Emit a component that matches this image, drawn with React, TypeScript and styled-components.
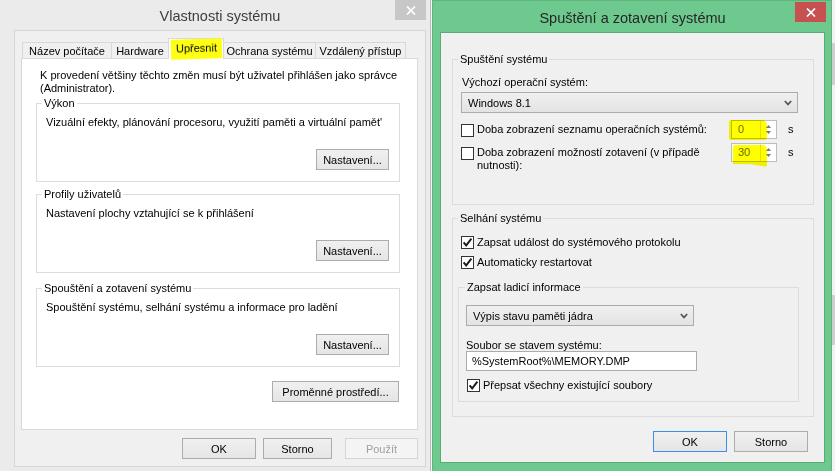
import React from "react";
import styled, { createGlobalStyle } from "styled-components";

const FONT = `"Liberation Sans", Arial, sans-serif`;

const GlobalStyle = createGlobalStyle`
  html, body { margin: 0; padding: 0; }
  body {
    width: 835px;
    height: 471px;
    overflow: hidden;
    background: #f4f4f4;
    font-family: ${FONT};
    font-size: 11px;
    color: #000;
  }
  * { box-sizing: border-box; }
`;

const Desktop = styled.div`
  display: flex;
  align-items: flex-start;
  width: 835px;
  height: 471px;
  overflow: hidden;
`;

/* ---------- window chrome ---------- */

const LeftWindow = styled.div`
  position: relative;
  flex: none;
  width: 431px;
  height: 471px;
  padding: 0 4px 0 14px;
  background: #ebebeb;
  border-right: 1px solid #bcbcbc;
  display: flex;
  flex-direction: column;
`;

const RightWindow = styled.div`
  position: relative;
  flex: none;
  width: 400px;
  height: 480px;
  margin-left: 1px;
  padding: 0 6px 0 7px;
  background: #6dc98d;
  border: 1px solid #5fb57c;
  display: flex;
  flex-direction: column;
`;

const TitleBar = styled.div<{ $h: number; $color: string }>`
  flex: none;
  height: ${(p) => p.$h}px;
  padding-top: 2px;
  display: flex;
  align-items: center;
  justify-content: center;
  font-size: 14.5px;
  color: ${(p) => p.$color};
  white-space: nowrap;
`;

const CloseButton = styled.div<{ $bg: string; $top: number; $right: number; $w: number }>`
  position: absolute;
  top: ${(p) => p.$top}px;
  right: ${(p) => p.$right}px;
  width: ${(p) => p.$w}px;
  height: 20px;
  background: ${(p) => p.$bg};
  display: flex;
  align-items: center;
  justify-content: center;
`;

const Client = styled.div<{ $h: number; $border: string }>`
  flex: none;
  height: ${(p) => p.$h}px;
  background: #f0f0f0;
  border: 1px solid ${(p) => p.$border};
  display: flex;
  flex-direction: column;
`;

const Backdrop = styled.div`
  flex: 1;
  height: 471px;
  background: #f2f2f2;
  display: flex;
  flex-direction: column;
`;

const BackdropBlock = styled.div<{ $mt: number; $h: number }>`
  margin-top: ${(p) => p.$mt}px;
  height: ${(p) => p.$h}px;
  background: #cfcfcf;
`;

/* ---------- tabs ---------- */

const LeftBody = styled.div`
  padding: 7px 7px 0 6px;
  display: flex;
  flex-direction: column;
`;

const TabStrip = styled.div`
  height: 20px;
  padding-left: 1px;
  display: flex;
  align-items: flex-end;
`;

const Tab = styled.div<{ $w: number; $active?: boolean }>`
  position: relative;
  z-index: ${(p) => (p.$active ? 1 : 0)};
  width: ${(p) => p.$w}px;
  height: ${(p) => (p.$active ? 21 : 16)}px;
  margin-bottom: ${(p) => (p.$active ? -1 : 0)}px;
  border: 1px solid #d9d9d9;
  border-bottom: none;
  background: ${(p) => (p.$active ? "#fff" : "#f0f0f0")};
  display: flex;
  align-items: center;
  justify-content: center;
  white-space: nowrap;
  & + & {
    margin-left: -1px;
  }
`;

const Marker = styled.span`
  display: inline-block;
  padding: 3px 5px 4px;
  line-height: 13px;
  background: #ffff14;
  transform: rotate(-1.5deg);
`;

const Panel = styled.div`
  height: 372px;
  background: #fff;
  border: 1px solid #d9d9d9;
  padding: 10px 17px 0 14px;
  display: flex;
  flex-direction: column;
`;

const Intro = styled.div`
  margin-left: 4px;
  line-height: 13px;
`;

/* ---------- group boxes ---------- */

const Group = styled.fieldset<{ $mt: number; $pl: number; $pb: number }>`
  margin: ${(p) => p.$mt}px 0 0;
  min-width: 0;
  padding: 0 10px ${(p) => p.$pb}px ${(p) => p.$pl}px;
  border: 1px solid #dcdcdc;
  display: flex;
  flex-direction: column;
`;

const Legend = styled.legend<{ $ml: number }>`
  margin-left: ${(p) => p.$ml}px;
  padding: 0 2px;
  line-height: 13px;
  white-space: nowrap;
`;

const Text = styled.div<{ $mt?: number; $ml?: number; $lh?: number }>`
  margin-top: ${(p) => p.$mt ?? 0}px;
  margin-left: ${(p) => p.$ml ?? 0}px;
  line-height: ${(p) => p.$lh ?? 13}px;
  white-space: nowrap;
`;

const ButtonRow = styled.div<{ $mt: number; $pr?: number; $gap?: number }>`
  margin-top: ${(p) => p.$mt}px;
  padding-right: ${(p) => p.$pr ?? 0}px;
  display: flex;
  justify-content: flex-end;
  gap: ${(p) => p.$gap ?? 0}px;
`;

const Button = styled.button<{ $w: number; $focus?: boolean; $ml?: number }>`
  width: ${(p) => p.$w}px;
  height: 21px;
  margin: 0 0 0 ${(p) => p.$ml ?? 0}px;
  padding: 0;
  font-family: ${FONT};
  font-size: 11px;
  color: #000;
  background: linear-gradient(#f0f0f0, #e5e5e5);
  border: 1px solid ${(p) => (p.$focus ? "#3c8ee6" : "#acacac")};
  border-radius: 0;
  &:disabled {
    color: #a0a0a0;
    background: #f4f4f4;
    border-color: #d5d5d5;
  }
`;

/* ---------- right dialog controls ---------- */

const RightBody = styled.div`
  padding: 20px 10px 0 11px;
  display: flex;
  flex-direction: column;
`;

const Combo = styled.div<{ $w: number; $mt: number }>`
  width: ${(p) => p.$w}px;
  height: 21px;
  margin-top: ${(p) => p.$mt}px;
  padding: 0 5px 0 6px;
  background: linear-gradient(#f0f0f0, #e3e3e3);
  border: 1px solid #acacac;
  display: flex;
  align-items: center;
  justify-content: space-between;
  white-space: nowrap;
`;

const SpinRow = styled.div<{ $mt: number }>`
  margin-top: ${(p) => p.$mt}px;
  display: flex;
  align-items: flex-start;
`;

const SpinLabel = styled.div`
  width: 254px;
  margin-top: 3px;
  line-height: 13px;
`;

const Spin = styled.div`
  position: relative;
  flex: none;
  width: 46px;
  height: 19px;
  background: #fff;
  border: 1px solid #bdbdbd;
  display: flex;
`;

const SpinValue = styled.div`
  flex: 1;
  padding-left: 6px;
  line-height: 17px;
  color: #6d6d6d;
`;

const SpinArrows = styled.div`
  width: 16px;
  border-left: 1px solid #e2e2e2;
  display: flex;
  flex-direction: column;
  align-items: center;
  justify-content: space-around;
  padding: 2px 0;
`;

const Highlight = styled.span<{ $tail?: boolean }>`
  position: absolute;
  left: ${(p) => (p.$tail ? 1 : -3)}px;
  top: ${(p) => (p.$tail ? 1 : -1)}px;
  width: ${(p) => (p.$tail ? 34 : 38)}px;
  height: ${(p) => (p.$tail ? 22 : 20)}px;
  background: #ffff00;
  mix-blend-mode: multiply;
  border-radius: 2px 5px 3px 2px;
  clip-path: ${(p) =>
    p.$tail ? "polygon(0 0, 100% 0, 100% 100%, 55% 88%, 0 86%)" : "none"};
`;

const Unit = styled.div`
  margin: 3px 0 0 11px;
  line-height: 13px;
`;

const CheckRow = styled.div<{ $mt: number; $ml?: number }>`
  margin-top: ${(p) => p.$mt}px;
  margin-left: ${(p) => p.$ml ?? 0}px;
  display: flex;
  align-items: center;
  line-height: 13px;
  white-space: nowrap;
`;

const Box = styled.span<{ $mt?: number }>`
  flex: none;
  width: 13px;
  height: 13px;
  margin: ${(p) => p.$mt ?? 0}px 3px 0 0;
  background: #fff;
  border: 1px solid #333;
  display: flex;
  align-items: center;
  justify-content: center;
`;

const InnerGroup = styled(Group)`
  width: 341px;
  margin-left: -3px;
`;

const TextInput = styled.div`
  width: 231px;
  height: 20px;
  padding-left: 5px;
  background: #fff;
  border: 1px solid #acacac;
  line-height: 18px;
  white-space: nowrap;
`;

/* ---------- small drawings ---------- */

const CloseX = () => (
  <svg width="10" height="9" viewBox="0 0 10 9">
    <path d="M1 0.5 L9 8.5 M9 0.5 L1 8.5" stroke="#fff" strokeWidth="1.7" fill="none" />
  </svg>
);

const Chevron = () => (
  <svg width="8" height="6" viewBox="0 0 8 6">
    <polyline points="0.8,1 4,4.4 7.2,1" stroke="#555" strokeWidth="1.7" fill="none" />
  </svg>
);

const Tri = ({ up }: { up?: boolean }) => (
  <svg width="5" height="3" viewBox="0 0 5 3">
    <polygon points={up ? "0,3 5,3 2.5,0" : "0,0 5,0 2.5,3"} fill="#777" />
  </svg>
);

const CheckBox = ({ checked, mt }: { checked?: boolean; mt?: number }) => (
  <Box $mt={mt}>
    {checked && (
      <svg width="11" height="11" viewBox="0 0 11 11">
        <polyline points="1.6,5.4 4.2,8.4 9.4,1.6" stroke="#1a1a1a" strokeWidth="1.9" fill="none" />
      </svg>
    )}
  </Box>
);

const SpinBox = ({ value, tail }: { value: string; tail?: boolean }) => (
  <Spin>
    <SpinValue>{value}</SpinValue>
    <SpinArrows>
      <Tri up />
      <Tri />
    </SpinArrows>
    <Highlight $tail={tail} />
  </Spin>
);

/* ---------- page ---------- */

const tabs = [
  { label: "Název počítače", w: 90 },
  { label: "Hardware", w: 58 },
  { label: "Upřesnit", w: 56, active: true },
  { label: "Ochrana systému", w: 93 },
  { label: "Vzdálený přístup", w: 91 },
];

const sections = [
  { title: "Výkon", text: "Vizuální efekty, plánování procesoru, využití paměti a virtuální pamět'", mt: 2 },
  { title: "Profily uživatelů", text: "Nastavení plochy vztahující se k přihlášení", mt: 6 },
  { title: "Spouštění a zotavení systému", text: "Spouštění systému, selhání systému a informace pro ladění", mt: 9 },
];

export default function App() {
  return (
    <>
      <GlobalStyle />
      <Desktop>
        <LeftWindow>
          <TitleBar $h={30} $color="#3d3d3d">Vlastnosti systému</TitleBar>
          <CloseButton $bg="#c7c7c7" $top={0} $right={4} $w={31}>
            <CloseX />
          </CloseButton>
          <Client $h={437} $border="#d6d6d6">
            <LeftBody>
              <TabStrip>
                {tabs.map((t) => (
                  <Tab key={t.label} $w={t.w} $active={t.active}>
                    {t.active ? <Marker>{t.label}</Marker> : t.label}
                  </Tab>
                ))}
              </TabStrip>
              <Panel>
                <Intro>
                  K provedení většiny těchto změn musí být uživatel přihlášen jako správce
                  <br />
                  (Administrator).
                </Intro>
                {sections.map((s) => (
                  <Group key={s.title} $mt={s.mt} $pl={9} $pb={11}>
                    <Legend $ml={-4}>{s.title}</Legend>
                    <Text $mt={6}>{s.text}</Text>
                    <ButtonRow $mt={20}>
                      <Button $w={73}>Nastavení...</Button>
                    </ButtonRow>
                  </Group>
                ))}
                <ButtonRow $mt={14} $pr={1}>
                  <Button $w={127}>Proměnné prostředí...</Button>
                </ButtonRow>
              </Panel>
              <ButtonRow $mt={8}>
                <Button $w={74}>OK</Button>
                <Button $w={69} $ml={7}>Storno</Button>
                <Button $w={73} $ml={13} disabled>
                  Použít
                </Button>
              </ButtonRow>
            </LeftBody>
          </Client>
        </LeftWindow>

        <RightWindow>
          <TitleBar $h={31} $color="#262626">Spuštění a zotavení systému</TitleBar>
          <CloseButton $bg="#c75050" $top={1} $right={5} $w={31}>
            <CloseX />
          </CloseButton>
          <Client $h={431} $border="#57ab74">
            <RightBody>
              <Group $mt={0} $pl={8} $pb={32}>
                <Legend $ml={-3}>Spuštění systému</Legend>
                <Text $mt={10} $ml={1}>Výchozí operační systém:</Text>
                <Combo $w={337} $mt={3}>
                  Windows 8.1
                  <Chevron />
                </Combo>
                <SpinRow $mt={7}>
                  <CheckBox mt={4} />
                  <SpinLabel>Doba zobrazení seznamu operačních systémů:</SpinLabel>
                  <SpinBox value="0" />
                  <Unit>s</Unit>
                </SpinRow>
                <SpinRow $mt={4}>
                  <CheckBox mt={4} />
                  <SpinLabel>
                    Doba zobrazení možností zotavení (v případě
                    <br />
                    nutnosti):
                  </SpinLabel>
                  <SpinBox value="30" tail />
                  <Unit>s</Unit>
                </SpinRow>
              </Group>

              <Group $mt={7} $pl={8} $pb={14}>
                <Legend $ml={-3}>Selhání systému</Legend>
                <CheckRow $mt={11}>
                  <CheckBox checked />
                  Zapsat událost do systémového protokolu
                </CheckRow>
                <CheckRow $mt={7}>
                  <CheckBox checked />
                  Automaticky restartovat
                </CheckRow>
                <InnerGroup $mt={12} $pl={7} $pb={9}>
                  <Legend $ml={-1}>Zapsat ladicí informace</Legend>
                  <Combo $w={228} $mt={11}>
                    Výpis stavu paměti jádra
                    <Chevron />
                  </Combo>
                  <Text $mt={13} $lh={12}>Soubor se stavem systému:</Text>
                  <TextInput>%SystemRoot%\MEMORY.DMP</TextInput>
                  <CheckRow $mt={8} $ml={1}>
                    <CheckBox checked />
                    Přepsat všechny existující soubory
                  </CheckRow>
                </InnerGroup>
              </Group>

              <ButtonRow $mt={14} $pr={6} $gap={7}>
                <Button $w={74} $focus>
                  OK
                </Button>
                <Button $w={74}>Storno</Button>
              </ButtonRow>
            </RightBody>
          </Client>
        </RightWindow>

        <Backdrop>
          <BackdropBlock $mt={43} $h={42} />
          <BackdropBlock $mt={210} $h={50} />
        </Backdrop>
      </Desktop>
    </>
  );
}
